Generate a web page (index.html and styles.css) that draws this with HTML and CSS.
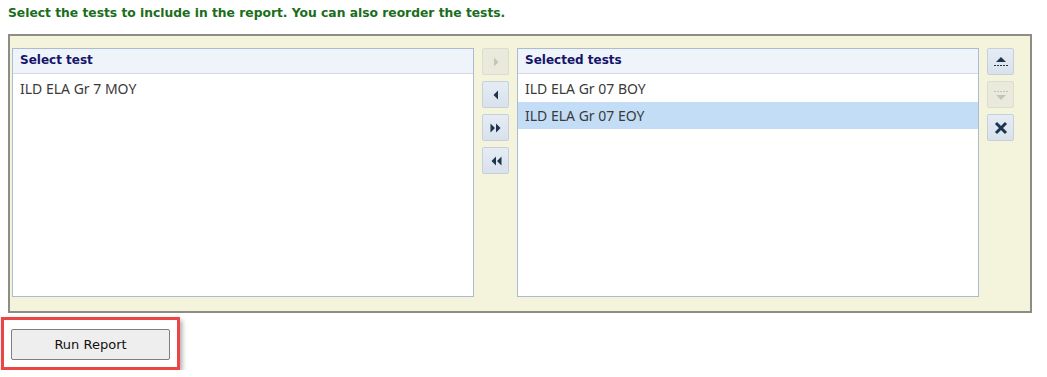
FILE: index.html
```html
<!DOCTYPE html>
<html lang="en">
<head>
    <meta charset="UTF-8">
    <title>Report Tests</title>
    <link rel="stylesheet" href="styles.css">
</head>
<body>
    <div class="page">
        <div class="intro">Select the tests to include in the report. You can also reorder the tests.</div>
        <div class="picker">
            <div class="list-box">
                <div class="list-header">Select test</div>
                <div class="list-body">
                    <div class="list-item">ILD ELA Gr 7 MOY</div>
                </div>
            </div>
            <div class="tool-column">
                <button class="tool-btn disabled" title="Add">
                    <svg width="12" height="12" viewBox="0 0 12 12"><path d="M4 1.5 L8.5 6 L4 10.5 Z"/></svg>
                </button>
                <button class="tool-btn" title="Remove">
                    <svg width="12" height="12" viewBox="0 0 12 12"><path d="M8 1.5 L3.5 6 L8 10.5 Z"/></svg>
                </button>
                <button class="tool-btn" title="Add all">
                    <svg width="12" height="12" viewBox="0 0 12 12"><path d="M0.5 1.5 L5 6 L0.5 10.5 Z M6 1.5 L10.5 6 L6 10.5 Z"/></svg>
                </button>
                <button class="tool-btn" title="Remove all">
                    <svg width="12" height="12" viewBox="0 0 12 12"><path d="M6 1.5 L1.5 6 L6 10.5 Z M11.5 1.5 L7 6 L11.5 10.5 Z"/></svg>
                </button>
            </div>
            <div class="list-box">
                <div class="list-header">Selected tests</div>
                <div class="list-body">
                    <div class="list-item">ILD ELA Gr 07 BOY</div>
                    <div class="list-item selected">ILD ELA Gr 07 EOY</div>
                </div>
            </div>
            <div class="tool-column">
                <button class="tool-btn" title="Move to top">
                    <svg width="16" height="14" viewBox="0 0 16 14"><path d="M8 2 L13 7 L3 7 Z"/><path class="dash" d="M1 10.5 H15"/></svg>
                </button>
                <button class="tool-btn disabled" title="Move to bottom">
                    <svg width="16" height="14" viewBox="0 0 16 14"><path class="dash" d="M1 3.5 H15"/><path d="M3 7 L13 7 L8 12 Z"/></svg>
                </button>
                <button class="tool-btn" title="Remove">
                    <svg width="14" height="14" viewBox="0 0 14 14"><path class="cross" d="M2 2 L12 12 M12 2 L2 12"/></svg>
                </button>
            </div>
        </div>
        <div class="run-highlight">
            <button class="run-btn">Run Report</button>
        </div>
    </div>
</body>
</html>
```

FILE: styles.css
```css
body, html {
    margin: 0;
    background-color: #ffffff;
}
.page {
    padding: 5px 15px 0 8px;
}
.intro {
    font-family: "DejaVu Sans", Verdana, sans-serif;
    font-size: 12.3px;
    font-weight: bold;
    color: #1a6e1a;
    line-height: 17px;
    height: 29px;
}
.picker {
    display: flex;
    gap: 8px;
    align-items: flex-start;
    background-color: #f4f4dc;
    border: 2px solid #8d8d86;
    padding: 12px 16px 14px 2px;
}
.list-box {
    width: 460px;
    height: 247px;
    background: #ffffff;
    border: 1px solid #aabbd2;
}
.list-header {
    height: 24px;
    line-height: 23px;
    padding-left: 7px;
    background: #eff3fa;
    border-bottom: 1px solid #d3d9e2;
    font-family: "DejaVu Sans", Verdana, sans-serif;
    font-size: 12px;
    font-weight: bold;
    color: #14146b;
}
.list-body {
    padding-top: 1px;
}
.list-item {
    height: 27px;
    line-height: 27px;
    padding-left: 7px;
    font-family: "Noto Sans", "Open Sans", sans-serif;
    font-size: 14px;
    color: #3a3a3a;
}
.list-item.selected {
    background: #c4ddf6;
}
.tool-column {
    display: flex;
    flex-direction: column;
    gap: 6px;
}
.tool-btn {
    width: 27px;
    height: 27px;
    padding: 0;
    display: flex;
    align-items: center;
    justify-content: center;
    background: linear-gradient(#e6ecf4, #d9e1ec);
    border: 1px solid #c6d0dd;
    border-radius: 2px;
    cursor: pointer;
}
.tool-btn svg path {
    fill: #1e3550;
}
.tool-btn .dash {
    fill: none;
    stroke: #1e3550;
    stroke-width: 1.2;
    stroke-dasharray: 2 1;
}
.tool-btn .cross {
    fill: none;
    stroke: #1e3550;
    stroke-width: 3;
}
.tool-btn.disabled {
    background: #eaeadc;
    border-color: #dcdccf;
    cursor: default;
}
.tool-btn.disabled svg path {
    fill: #c4c4bb;
}
.tool-btn.disabled .dash {
    fill: none;
    stroke: #c4c4bb;
}
.run-highlight {
    display: inline-block;
    margin: 4px 0 0 -7px;
    padding: 9px 7px 7px 7px;
    border: 3px solid #ec4545;
    box-shadow: 2px 3px 5px rgba(0, 0, 0, 0.35);
}
.run-btn {
    display: block;
    width: 159px;
    height: 31px;
    background: #eeeeee;
    border: 1px solid #7e7e7e;
    border-radius: 2px;
    font-family: "DejaVu Sans", Verdana, sans-serif;
    font-size: 13px;
    color: #111111;
    cursor: pointer;
}
```
